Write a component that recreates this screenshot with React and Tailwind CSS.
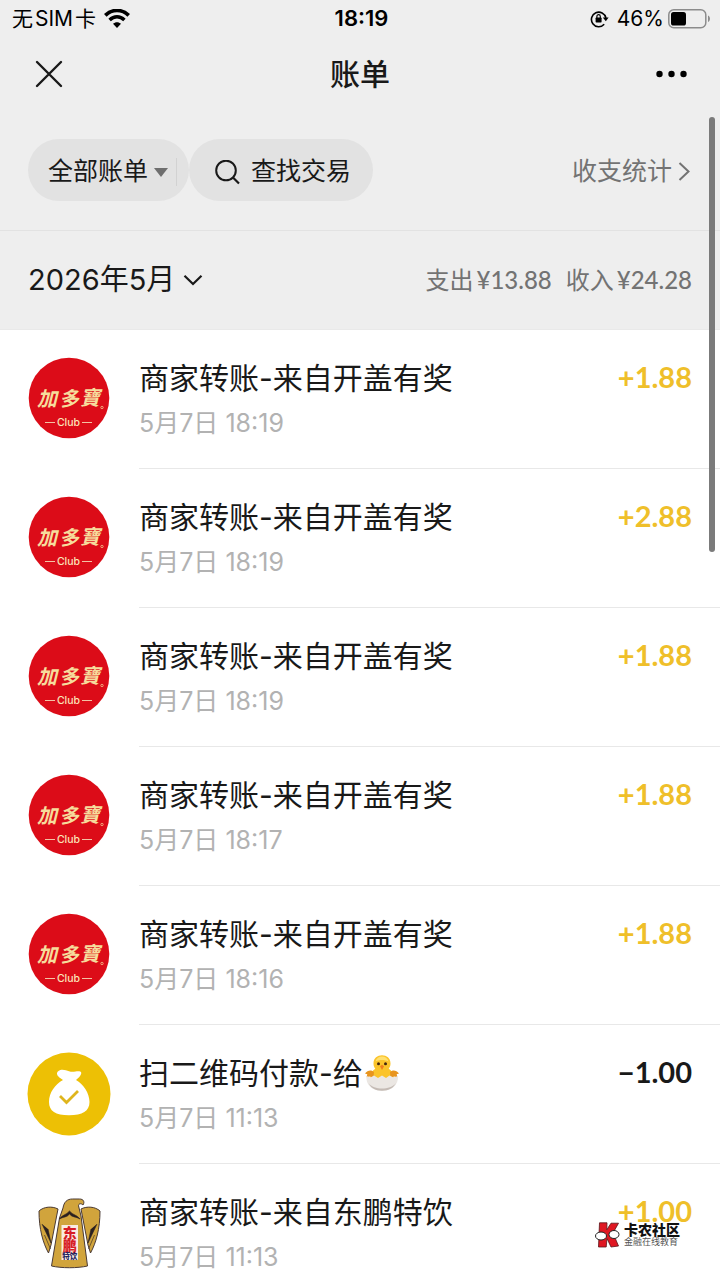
import React from "react";

const transactions = [
  { id: 1, logo: "jdb", title: "商家转账-来自开盖有奖", time: "5月7日 18:19", amount: "+1.88" },
  { id: 2, logo: "jdb", title: "商家转账-来自开盖有奖", time: "5月7日 18:19", amount: "+2.88" },
  { id: 3, logo: "jdb", title: "商家转账-来自开盖有奖", time: "5月7日 18:19", amount: "+1.88" },
  { id: 4, logo: "jdb", title: "商家转账-来自开盖有奖", time: "5月7日 18:17", amount: "+1.88" },
  { id: 5, logo: "jdb", title: "商家转账-来自开盖有奖", time: "5月7日 18:16", amount: "+1.88" },
  { id: 6, logo: "bag", title: "扫二维码付款-给", chick: true, time: "5月7日 11:13", amount: "−1.00" },
  { id: 7, logo: "eagle", title: "商家转账-来自东鹏特饮", time: "5月7日 11:13", amount: "+1.00" },
];

function WifiIcon() {
  return (
    <svg className="h-5 w-[26px]" viewBox="0 0 26 20" fill="none" aria-hidden="true">
      <path d="M1.3 6.400C8 -.2 18 -.2 24.700 6.400" stroke="#000" strokeWidth="3.700" />
      <path d="M5.600 10.900c4.400-4.200 10.400-4.200 14.800 0" stroke="#000" strokeWidth="3.500" />
      <path d="M13 18.900l-4-4.100c2.200-2.100 5.800-2.100 8 0z" fill="#000" />
    </svg>
  );
}

function RotationLockIcon() {
  return (
    <svg className="h-[18px] w-[19px]" viewBox="0 0 19 18" fill="none" aria-hidden="true">
      <path d="M14.2 14.300A7.300 7.300 0 1 1 15.900 8" stroke="#000" strokeWidth="1.600" />
      <path d="M12.800 7.600h5.800l-2.800 3.600z" fill="#000" />
      <rect x="5.600" y="7.600" width="6" height="4.800" rx=".7" fill="#000" />
      <path d="M6.900 8V6.400a1.700 1.700 0 0 1 3.400 0V8" stroke="#000" strokeWidth="1.200" />
    </svg>
  );
}

function BatteryIcon() {
  return (
    <svg className="h-5 w-[43px]" viewBox="0 0 43 20" fill="none" aria-hidden="true">
      <rect x=".8" y=".8" width="37" height="18" rx="5" stroke="#8c8c8c" strokeWidth="1.500" />
      <rect x="3" y="3.100" width="15" height="13.400" rx="2.600" fill="#000" />
      <path d="M40 6.600c2.600.8 2.600 5.600 0 6.400z" fill="#8c8c8c" />
    </svg>
  );
}

function JdbLogo() {
  return (
    <svg className="size-[82px]" viewBox="0 0 82 82" role="img" aria-label="加多寶 Club">
      <circle cx="41" cy="41" r="40.300" fill="#dc0c18" />
      <g fill="#f6dc9c" className="font-['Noto_Sans_CJK_TC',serif] font-bold italic">
        <text x="9" y="49" fontSize="20">加</text>
        <text x="31" y="49" fontSize="20">多</text>
        <text x="52" y="48" fontSize="20">寶</text>
      </g>
      <circle cx="74" cy="50.500" r="1.200" fill="none" stroke="#f6dc9c" strokeWidth=".7" />
      <path d="M17 65.500h10M54 65.500h10" stroke="#f3c2a4" strokeWidth="1" />
      <text x="40.500" y="69" fontSize="10.500" textAnchor="middle" fill="#fae3b8" className="font-['Inter',sans-serif] font-medium">Club</text>
    </svg>
  );
}

function BagLogo() {
  return (
    <svg className="size-[84px] shrink-0" viewBox="0 0 84 84" aria-hidden="true">
      <circle cx="42" cy="42" r="41.500" fill="#edc005" />
      <path d="M31.500 19c3-2.500 7.500-.8 10.500.3 4.500 1.500 8-.8 11.200.2 2.300.8.5 4.500-2 6.600L49 28c7.500 4.500 13.500 13 13.500 22 0 9-7 13.200-20.500 13.200S22 59 22 50c0-9.500 6-17.500 14-22l-2.500-1.800c-3-1.800-5-5.200-2-7.200z" fill="#fff" />
      <path d="M33 44l6.500 6.500L51 39" fill="none" stroke="#dfb51c" strokeWidth="2.800" />
    </svg>
  );
}

function EagleLogo() {
  return (
    <svg className="h-[84px] w-[82px]" viewBox="0 0 82 84" role="img" aria-label="东鹏特饮">
      <g fill="#d1a43c" stroke="#4a3a34" strokeWidth="1" strokeLinejoin="round">
        <path d="M11 20c5-4.500 13-5 19-2L23 54l-2.500 8C15 52 11 38 11 20z" />
        <path d="M72 20c-5-4.500-13-5-19-2l7 36 2.500 8C68 52 72 38 72 20z" />
        <path d="M35 17c1-6 4-9 9.500-9h7c4 0 5.500 3 3.500 6-2-2-4.500-1.500-4.500.8L53 25l6.500 50c-10 2.300-26 2.300-36 0L31.500 27z" />
      </g>
      <path d="M31.500 28c2-4 7-4 10-8 3 4 8 4 10.500 8-4-2.500-8-1.500-10.500-5-2.500 3.500-6 2.500-10 5zM14 33l9 19-3-14M16.500 44l6 14M69 33l-9 19 3-14M66.500 44l-6 14" fill="#2a2020" stroke="#2a2020" strokeWidth=".6" />
      <rect x="33.500" y="34" width="16.500" height="35" fill="#f9ebe2" />
      <g textAnchor="middle" className="font-['Noto_Sans_CJK_SC',sans-serif] font-black">
        <text x="41.700" y="46.500" fontSize="14" fill="#d71b25">东</text>
        <text x="41.700" y="60" fontSize="14" fill="#d71b25">鹏</text>
        <text x="41.700" y="68" fontSize="7.500" fill="#25255f">特饮</text>
      </g>
    </svg>
  );
}

function HatchingChick() {
  return (
    <svg className="h-9 w-9" viewBox="0 0 36 36" role="img" aria-label="🐣">
      <path d="M9.500 8.500C9.500 3 13.500.3 18 .3s8.500 2.700 8.500 8.200c0 2.500-.8 4-1.800 5.200 2.800 1.600 4.800 4.300 4.800 9.300H6.500c0-5 2-7.700 4.800-9.300-1-1.200-1.800-2.700-1.800-5.200z" fill="#fbc42b" />
      <path d="M11.500 6.500C12.300 3 15 1.400 18 1.400s5.700 1.600 6.500 5.100c-4-2-9-2-13 0z" fill="#ffe070" />
      <path d="M10 17C7.500 14.500 3.500 15 1 18.500l2.300.8-.8 3 3.500-.8 3.500 1.500zM26 17c2.500-2.500 6.500-2 9 1.500l-2.300.8.8 3-3.500-.8-3.500 1.500z" fill="#e8951f" />
      <circle cx="14.500" cy="8.800" r="1.500" fill="#42250f" />
      <circle cx="21.500" cy="8.800" r="1.500" fill="#42250f" />
      <path d="M16 11.300l2-1.600 2 1.600-2 3.700z" fill="#ef7f1b" />
      <path d="M2.500 21l4 1.500 3.500-2 4 2.500 4-2.500 4 2.500 3.500-2.500 4 2 4.500-1.500C34.500 30 28 35.700 18 35.700S1.500 30 2.500 21z" fill="#ebe7e3" />
      <path d="M4.500 28c3 4 8 5.500 13.500 5.500S29 32 32 28c-2 4.500-7 7.700-14 7.700S6.500 32.500 4.500 28z" fill="#c4bbb5" />
    </svg>
  );
}

function Logo({ type }) {
  if (type === "jdb") return <JdbLogo />;
  if (type === "bag") return <BagLogo />;
  return <EagleLogo />;
}

function TransactionRow({ item }) {
  return (
    <li className="flex h-[139px] pl-7">
      <div className="flex w-[111px] shrink-0 items-start pt-[27px]">
        <div className="flex w-[82px] justify-center">
          <Logo type={item.logo} />
        </div>
      </div>
      <div className="flex flex-1 items-start justify-between border-b border-[#e8e8e8] pt-7 pr-7">
        <div>
          <h2 className="flex h-10 items-center gap-px text-[30px] leading-10 text-[#191919]">
            {item.title}
            {item.chick && <HatchingChick />}
          </h2>
          <p className="mt-[7px] text-[25px] leading-9 text-[#b2b2b2]">{item.time}</p>
        </div>
        <span
          className={
            item.amount.startsWith("+")
              ? "font-['Lato',sans-serif] text-[29px] leading-[38px] font-bold text-[#efbf2a]"
              : "font-['Lato',sans-serif] text-[29px] leading-[38px] font-bold text-[#191919]"
          }
        >
          {item.amount}
        </span>
      </div>
    </li>
  );
}

function Watermark() {
  return (
    <div className="pointer-events-none absolute right-10 bottom-8 flex items-center gap-1">
      <svg className="h-[26px] w-[25px]" viewBox="0 0 25 26" aria-hidden="true">
        <path d="M4.500.8h7.500l-.2 7L16 1.200h7.500L18 11l5.500 13-7.500 1-4-8.500-.8 8.500H3.500z" fill="#df1722" stroke="#58151a" strokeWidth=".8" />
        <ellipse cx="6" cy="14" rx="5.500" ry="4" fill="#fff" stroke="#222" strokeWidth="1" />
        <ellipse cx="19" cy="12.500" rx="5" ry="4" fill="#fff" stroke="#222" strokeWidth="1" />
      </svg>
      <div className="flex flex-col">
        <span className="text-[14px] leading-[14px] font-black text-[#111]">卡农社区</span>
        <span className="text-[9px] leading-[10px] text-[#555]">金融在线教育</span>
      </div>
    </div>
  );
}

export default function App() {
  return (
    <div className="relative flex h-screen flex-col overflow-hidden bg-white font-['Inter','Noto_Sans_CJK_SC',sans-serif] text-[#191919]">
      <header className="bg-[#eee]">
        <div className="grid h-[37px] grid-cols-3 items-center pr-[9px] pl-3 text-black">
          <div className="flex items-center gap-2">
            <span className="flex gap-0.5 text-[21px]">
              <span>无</span>
              <span>SIM</span>
              <span>卡</span>
            </span>
            <WifiIcon />
          </div>
          <time className="text-center text-[22px] font-semibold">18:19</time>
          <div className="flex items-center justify-end">
            <RotationLockIcon />
            <span className="mr-1 ml-2 text-[21px]">46%</span>
            <BatteryIcon />
          </div>
        </div>
        <nav className="grid h-[73px] grid-cols-3 items-center px-8">
          <button type="button" aria-label="关闭" className="flex w-[34px] justify-center">
            <svg className="size-7" viewBox="0 0 28 28" fill="none" aria-hidden="true">
              <path d="M2 2l24 24M26 2L2 26" stroke="#191919" strokeWidth="2.400" strokeLinecap="round" />
            </svg>
          </button>
          <h1 className="text-center text-[30px] leading-10 font-medium">账单</h1>
          <button type="button" aria-label="更多" className="justify-self-end">
            <svg className="h-2 w-8" viewBox="0 0 32 8" fill="#000" aria-hidden="true">
              <circle cx="3.500" cy="4" r="3.200" />
              <circle cx="15.500" cy="4" r="3.200" />
              <circle cx="27.500" cy="4" r="3.200" />
            </svg>
          </button>
        </nav>
      </header>

      <section className="flex h-[121px] items-center justify-between border-b border-[#e2e2e2] bg-[#eee] px-7">
        <div className="flex">
          <button type="button" className="flex h-[62px] items-center rounded-full bg-[#e2e2e2] pt-1 pr-3 pl-5 text-[25px]">
            全部账单
            <svg className="ml-1.5 h-[9px] w-3.5" viewBox="0 0 14 9" aria-hidden="true">
              <path d="M0 0h14L7 9z" fill="#6e6e6e" />
            </svg>
            <span className="ml-2 h-7 border-l border-[#d2d2d2]" />
          </button>
          <button type="button" className="flex h-[62px] items-center gap-[11px] rounded-full bg-[#e2e2e2] pt-1 pr-[22px] pl-[26px] text-[25px]">
            <svg className="size-[25px]" viewBox="0 0 25 25" fill="none" aria-hidden="true">
              <circle cx="11" cy="10.500" r="9.800" stroke="#191919" strokeWidth="2" />
              <path d="M18 17.500l6 6" stroke="#191919" strokeWidth="2.200" />
            </svg>
            查找交易
          </button>
        </div>
        <a href="#stats" className="flex items-center gap-1.5 pt-1 pr-0.5 text-[25px] text-[#737373]">
          收支统计
          <svg className="h-5 w-3" viewBox="0 0 12 20" fill="none" aria-hidden="true">
            <path d="M1.500 1l9 8.500-9 8.500" stroke="#737373" strokeWidth="2" />
          </svg>
        </a>
      </section>

      <section className="flex h-[99px] items-center justify-between border-b border-[#e9e9e9] bg-[#eee] px-7">
        <button type="button" className="flex items-center gap-2 text-[29px]">
          2026年5月
          <svg className="h-[11px] w-5" viewBox="0 0 20 11" fill="none" aria-hidden="true">
            <path d="M1.500 .8L10 9l8.500-8.200" stroke="#191919" strokeWidth="2.200" />
          </svg>
        </button>
        <p className="flex gap-3.5 font-['Lato','Noto_Sans_CJK_SC',sans-serif] text-2xl text-[#737373]">
          <span className="flex gap-[3px]">
            <span>支出</span>
            <span className="font-medium">¥13.88</span>
          </span>
          <span className="flex gap-[3px]">
            <span>收入</span>
            <span className="font-medium">¥24.28</span>
          </span>
        </p>
      </section>

      <ul className="min-h-0 flex-1 overflow-y-auto [scrollbar-width:none]">
        {transactions.map((item) => (
          <TransactionRow key={item.id} item={item} />
        ))}
      </ul>

      <div className="pointer-events-none absolute top-[117px] right-[5px] h-[435px] w-1.5 rounded-full bg-[#7b7b7b]" />
      <Watermark />
    </div>
  );
}
